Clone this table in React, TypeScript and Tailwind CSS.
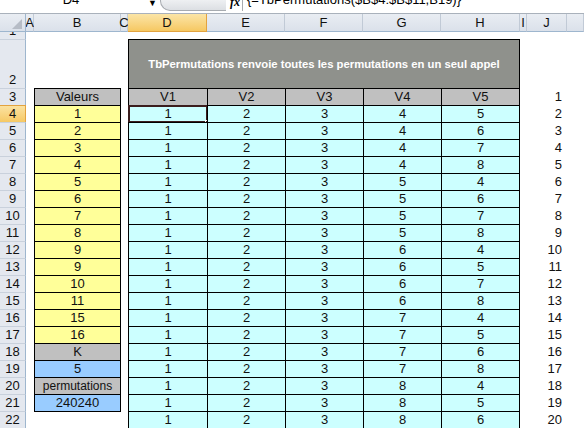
import React from "react"

const valeurs = ["1", "2", "3", "4", "5", "6", "7", "8", "9", "9", "10", "11", "15", "16"]

const perms = [
  [1, 2, 3, 4, 5], [1, 2, 3, 4, 6], [1, 2, 3, 4, 7], [1, 2, 3, 4, 8],
  [1, 2, 3, 5, 4], [1, 2, 3, 5, 6], [1, 2, 3, 5, 7], [1, 2, 3, 5, 8],
  [1, 2, 3, 6, 4], [1, 2, 3, 6, 5], [1, 2, 3, 6, 7], [1, 2, 3, 6, 8],
  [1, 2, 3, 7, 4], [1, 2, 3, 7, 5], [1, 2, 3, 7, 6], [1, 2, 3, 7, 8],
  [1, 2, 3, 8, 4], [1, 2, 3, 8, 5], [1, 2, 3, 8, 6],
]

const letters = ["A", "B", "C", "D", "E", "F", "G", "H", "I", "J", ""]

// contenu de la colonne B, lignes 3 à 22
function colB(row: number) {
  if (row === 3) return { text: "Valeurs", bg: "bg-[#c0c0c0]" }
  if (row >= 4 && row <= 17) return { text: valeurs[row - 4], bg: "bg-[#ffff99]" }
  if (row === 18) return { text: "K", bg: "bg-[#c0c0c0]" }
  if (row === 19) return { text: "5", bg: "bg-[#99ccff]" }
  if (row === 20) return { text: "permutations", bg: "bg-[#c0c0c0]" }
  if (row === 21) return { text: "240240", bg: "bg-[#99ccff]" }
  return null
}

function FormulaBar() {
  return (
    <div className="flex h-[14px] border-b-[1px] border-[#a9b1bb] bg-white text-[13px] leading-[13px] text-black overflow-hidden">
      <div className="relative flex h-[11px] w-[160px] justify-center overflow-hidden">
        <span className="-mt-[7px] mr-[18px]">D4</span>
        <span className="absolute right-[3px] -top-[3px] text-[9px]">▼</span>
      </div>
      <div className="h-[11px] w-[66px] rounded-bl-[10px] border-b border-l border-[#a7abb0] bg-gradient-to-b from-[#eef0f2] to-[#dcdfe3]" />
      <div className="h-[11px] w-[16px] overflow-hidden">
        <span className="-mt-[4px] ml-[4px] block font-['Liberation_Serif',serif] text-[12px] font-bold italic">fx</span>
      </div>
      <div className="h-[11px] border-l border-[#a7abb0]" />
      <div className="h-[11px] flex-1 overflow-hidden pl-[4px]">
        <span className="-mt-[7px] block whitespace-nowrap">{"{=TbPermutations($B$4:$B$11,B19)}"}</span>
      </div>
    </div>
  )
}

function ColHeader({ label, active }: { label: string; active?: boolean }) {
  return (
    <div
      className={
        active
          ? "flex justify-center border-b border-r border-b-[#e3a33f] border-r-[#e3a33f] bg-gradient-to-b from-[#fbe5a6] to-[#f6c861] pt-[1px] leading-[16px]"
          : "flex justify-center border-b border-r border-b-[#9eb6ce] border-r-[#c1cad6] bg-gradient-to-b from-[#e9edf3] to-[#dbe1ea] pt-[1px] leading-[16px]"
      }
    >
      {label}
    </div>
  )
}

function RowHeader({ n, active }: { n: number; active?: boolean }) {
  return (
    <div
      className={[
        "flex items-end justify-center overflow-hidden border-r leading-[16px]",
        n > 1 ? "border-t" : "",
        active
          ? "border-r-[#e3a33f] border-t-[#e3a33f] bg-gradient-to-b from-[#fbe2a0] to-[#f6c964]"
          : "border-r-[#9eb6ce] border-t-[#c9d1dc] bg-[#e4e8ef]",
      ].join(" ")}
    >
      {n}
    </div>
  )
}

export default function App() {
  const rows = Array.from({ length: 20 }, (_, i) => i + 3)

  return (
    <div className="h-[428px] w-[584px] overflow-hidden bg-white font-['Liberation_Sans',Arial,sans-serif] text-[13px] text-black">
      <FormulaBar />

      <div className="grid grid-cols-[26px_8px_87px_7px_79px_78px_78px_78px_79px_7px_40px_1fr] grid-rows-[18px_7px_49px_repeat(20,17px)] text-[#111]">
        {/* en-têtes de colonnes */}
        <div className="relative border-b border-r border-b-[#9eb6ce] border-r-[#9eb6ce] bg-gradient-to-b from-[#e9edf3] to-[#dbe1ea]">
          <svg className="absolute bottom-[2px] right-[3px]" width="10" height="10" viewBox="0 0 10 10">
            <polygon points="10,0 10,10 0,10" fill="#b6bcc6" />
          </svg>
        </div>
        {letters.map((l) => (
          <ColHeader key={l || "K"} label={l} active={l === "D"} />
        ))}

        {/* ligne 1 */}
        <RowHeader n={1} />
        <div className="col-span-11" />

        {/* ligne 2 : titre fusionné D2:H2 */}
        <RowHeader n={2} />
        <div className="col-span-3" />
        <div className="col-span-5 flex items-center justify-center border-l border-r border-t border-black bg-[#8f918c] text-[11.3px] font-bold text-white">
          TbPermutations renvoie toutes les permutations en un seul appel
        </div>
        <div className="col-span-3" />

        {rows.map((r) => {
          const b = colB(r)
          const p = r >= 4 ? perms[r - 4] : null
          return (
            <React.Fragment key={r}>
              <RowHeader n={r} active={r === 4} />
              <div />
              {b ? (
                <div className={`flex justify-center border-l border-r border-t border-black leading-[16px] ${b.bg} ${r === 20 ? "text-[12px]" : ""}`}>
                  {b.text}
                </div>
              ) : (
                <div className={r === 22 ? "border-t border-black" : ""} />
              )}
              <div />
              {[0, 1, 2, 3, 4].map((c) => (
                <div
                  key={c}
                  className={[
                    "relative flex justify-center border-l border-t border-black leading-[16px]",
                    c === 4 ? "border-r" : "",
                    r === 3 ? "bg-[#c0c0c0]" : "bg-[#ccffff]",
                  ].join(" ")}
                >
                  {r === 3 ? `V${c + 1}` : p?.[c]}
                  {r === 4 && c === 0 && (
                    <>
                      <div className="absolute -left-[1px] -top-[1px] h-[18px] w-[80px] border-2 border-[#3b1d1d]" />
                      <div className="absolute -bottom-[3px] -right-[3px] h-[5px] w-[5px] border border-white bg-[#3b1d1d]" />
                    </>
                  )}
                </div>
              ))}
              <div />
              <div className="flex justify-end border-t border-transparent pr-[5px] leading-[16px]">{r - 2}</div>
              <div />
            </React.Fragment>
          )
        })}
      </div>
    </div>
  )
}
